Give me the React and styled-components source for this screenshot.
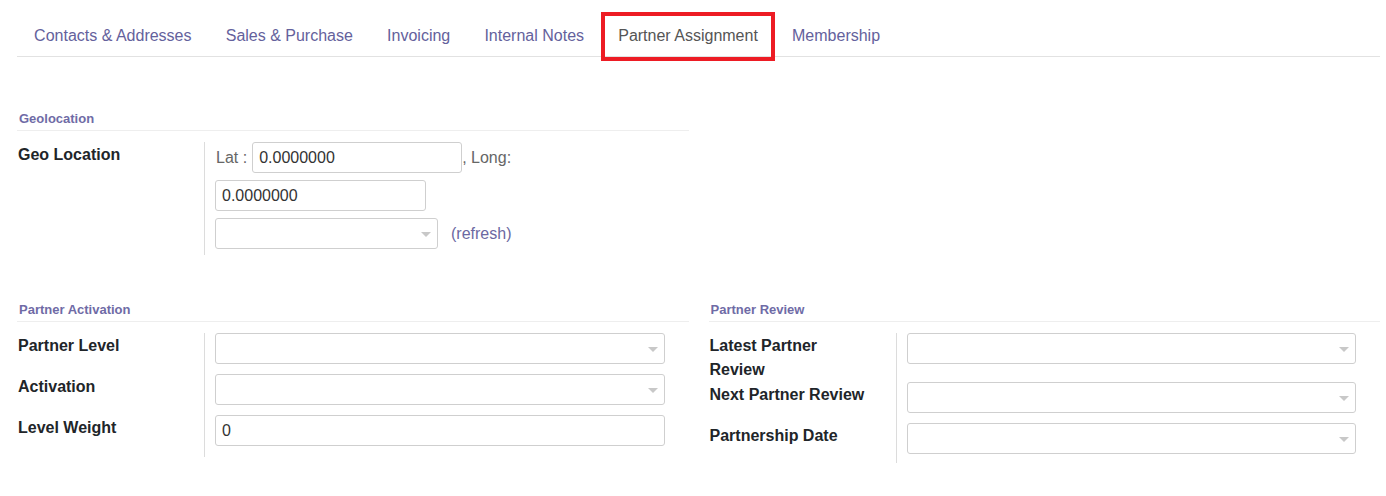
import React from 'react';
import styled, { createGlobalStyle } from 'styled-components';

const GlobalStyle = createGlobalStyle`
  body {
    margin: 0;
    background: #fff;
    font-family: "Liberation Sans", Arial, sans-serif;
    color: #212529;
  }
`;

const Page = styled.div`
  width: 1386px;
  padding: 14px 6px 0 17px;
  box-sizing: border-box;
`;

const TabBar = styled.ul`
  display: flex;
  list-style: none;
  margin: 0;
  padding: 0;
  border-bottom: 1px solid #e2e2e2;
`;

const Tab = styled.li`
  position: relative;
  padding: 12px 17.1px 10px;
  font-size: 16px;
  line-height: 20px;
  color: ${(p) => (p.$active ? '#555' : '#64619c')};

  ${(p) =>
    p.$active &&
    `
    &::after {
      content: '';
      position: absolute;
      top: -2px;
      bottom: -5px;
      left: 0;
      right: 0;
      border: 4px solid #ed1c24;
    }
  `}
`;

const Grid = styled.div`
  display: grid;
  grid-template-columns: 1fr 1fr;
  column-gap: 20px;
  padding-top: 54px;
`;

const Group = styled.section`
  margin-bottom: ${(p) => p.$gap || 0}px;
`;

const GroupTitle = styled.div`
  font-size: 13px;
  font-weight: bold;
  line-height: 16px;
  color: #6f6ba6;
  padding: 0 0 3px 2px;
  border-bottom: 1px solid #eeeeee;
  margin-bottom: 11px;
`;

const FieldTable = styled.div`
  display: grid;
  grid-template-columns: 187px 1fr;
  padding-right: 24px;
`;

const Label = styled.div`
  font-size: 16px;
  font-weight: bold;
  line-height: 24px;
  padding: 1px 24px 0 1px;
  color: #212529;
`;

const Value = styled.div`
  border-left: 1px solid #dcdcdc;
  padding: 0 0 ${(p) => p.$pb ?? 10}px 10px;
  display: flex;
  flex-direction: column;
  gap: ${(p) => p.$gap || 0}px;
`;

const Line = styled.div`
  display: flex;
  align-items: center;
  font-size: 16px;
  color: #666;
`;

const Input = styled.div`
  box-sizing: border-box;
  height: 31px;
  width: ${(p) => (p.$w ? `${p.$w}px` : '100%')};
  border: 1px solid #cfcfcf;
  border-radius: 3px;
  padding: 0 6px;
  display: flex;
  align-items: center;
  font-size: 16px;
  color: #333;
  background: #fff;
`;

const Select = styled(Input)`
  justify-content: flex-end;
  padding-right: 6px;
`;

const Arrow = styled.span`
  width: 0;
  height: 0;
  margin-top: 2px;
  border-left: 5px solid transparent;
  border-right: 5px solid transparent;
  border-top: 5px solid #c8c8c8;
`;

const Muted = styled.span`
  margin: ${(p) => p.$m || '0'};
  color: ${(p) => (p.$link ? '#6b68a2' : '#666')};
`;

const tabs = [
  'Contacts & Addresses',
  'Sales & Purchase',
  'Invoicing',
  'Internal Notes',
  'Partner Assignment',
  'Membership',
];

function SelectField() {
  return (
    <Select>
      <Arrow />
    </Select>
  );
}

export default function App() {
  return (
    <Page>
      <GlobalStyle />
      <TabBar>
        {tabs.map((t) => (
          <Tab key={t} $active={t === 'Partner Assignment'}>
            {t}
          </Tab>
        ))}
      </TabBar>

      <Grid>
        <Group $gap={47}>
          <GroupTitle>Geolocation</GroupTitle>
          <FieldTable>
            <Label>Geo Location</Label>
            <Value $gap={7} $pb={6}>
              <Line>
                <Muted $m="0 5px 0 1px">Lat :</Muted>
                <Input $w={210}>0.0000000</Input>
                <Muted>, Long:</Muted>
              </Line>
              <Line>
                <Input $w={211}>0.0000000</Input>
              </Line>
              <Line>
                <Select $w={223}>
                  <Arrow />
                </Select>
                <Muted $link $m="0 0 0 13px">(refresh)</Muted>
              </Line>
            </Value>
          </FieldTable>
        </Group>
        <div />

        <Group>
          <GroupTitle>Partner Activation</GroupTitle>
          <FieldTable>
            <Label>Partner Level</Label>
            <Value>
              <SelectField />
            </Value>
            <Label>Activation</Label>
            <Value>
              <SelectField />
            </Value>
            <Label>Level Weight</Label>
            <Value $pb={11}>
              <Input>0</Input>
            </Value>
          </FieldTable>
        </Group>

        <Group>
          <GroupTitle>Partner Review</GroupTitle>
          <FieldTable>
            <Label>Latest Partner Review</Label>
            <Value>
              <SelectField />
            </Value>
            <Label>Next Partner Review</Label>
            <Value>
              <SelectField />
            </Value>
            <Label>Partnership Date</Label>
            <Value $pb={9}>
              <SelectField />
            </Value>
          </FieldTable>
        </Group>
      </Grid>
    </Page>
  );
}
